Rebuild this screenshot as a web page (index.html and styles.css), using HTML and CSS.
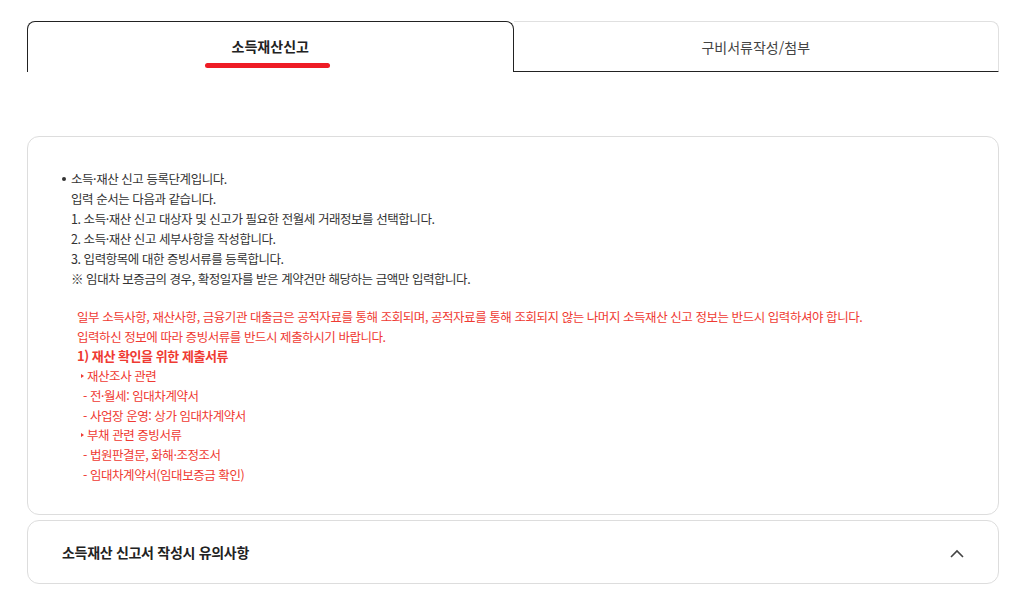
FILE: index.html
```html
<!DOCTYPE html>
<html lang="ko">
<head>
    <meta charset="UTF-8">
    <meta name="viewport" content="width=device-width, initial-scale=1.0">
    <title>소득재산신고</title>
    <link rel="stylesheet" href="styles.css">
</head>
<body>
    <div class="page">
        <div class="tabs">
            <div class="tab active">
                <span class="tab-label">소득재산신고</span>
                <span class="tab-bar"></span>
            </div>
            <div class="tab">
                <span class="tab-label">구비서류작성/첨부</span>
            </div>
        </div>

        <div class="guide">
            <ul class="guide-list">
                <li>
                    소득·재산 신고 등록단계입니다.<br>
                    입력 순서는 다음과 같습니다.<br>
                    1. 소득·재산 신고 대상자 및 신고가 필요한 전월세 거래정보를 선택합니다.<br>
                    2. 소득·재산 신고 세부사항을 작성합니다.<br>
                    3. 입력항목에 대한 증빙서류를 등록합니다.<br>
                    ※ 임대차 보증금의 경우, 확정일자를 받은 계약건만 해당하는 금액만 입력합니다.
                </li>
            </ul>

            <div class="notice">
                <p>일부 소득사항, 재산사항, 금융기관 대출금은 공적자료를 통해 조회되며, 공적자료를 통해 조회되지 않는 나머지 소득재산 신고 정보는 반드시 입력하셔야 합니다.</p>
                <p>입력하신 정보에 따라 증빙서류를 반드시 제출하시기 바랍니다.</p>
                <p class="notice-title">1) 재산 확인을 위한 제출서류</p>
                <p class="notice-group">재산조사 관련</p>
                <p class="notice-item">- 전·월세: 임대차계약서</p>
                <p class="notice-item">- 사업장 운영: 상가 임대차계약서</p>
                <p class="notice-group">부채 관련 증빙서류</p>
                <p class="notice-item">- 법원판결문, 화해·조정조서</p>
                <p class="notice-item">- 임대차계약서(임대보증금 확인)</p>
            </div>
        </div>

        <div class="accordion">
            <span class="accordion-title">소득재산 신고서 작성시 유의사항</span>
            <svg class="chevron" width="14" height="9" viewBox="0 0 14 9">
                <path d="M1 8 L7 2 L13 8" fill="none" stroke="#444" stroke-width="1.6"/>
            </svg>
        </div>
    </div>
</body>
</html>
```

FILE: styles.css
```css
body {
    margin: 0;
    font-family: "Noto Sans CJK KR", "Noto Sans", sans-serif;
    color: #333;
    background: #fff;
}

.page {
    padding: 21px 24px 0 27px;
}

/* tabs */
.tabs {
    display: flex;
    height: 51px;
}

.tab {
    flex: 1;
    display: flex;
    flex-direction: column;
    align-items: center;
    justify-content: center;
    border: 1px solid #e0e0e0;
    border-left: none;
    border-bottom: 1px solid #222;
    border-radius: 0 8px 0 0;
    box-sizing: border-box;
    font-size: 14px;
    color: #444;
}

.tab .tab-label {
    line-height: 20px;
}

.tab.active {
    border: 1px solid #222;
    border-bottom: none;
    border-radius: 8px 8px 0 0;
    color: #222;
    font-weight: 700;
    padding-top: 9px;
}

.tab-bar {
    display: block;
    width: 125px;
    height: 5px;
    margin-top: 7px;
    margin-left: -5px;
    border-radius: 3px;
    background: #ee1c25;
}

/* guide box */
.guide {
    margin-top: 64px;
    border: 1px solid #ddd;
    border-radius: 12px;
    padding: 32px 34px 30px;
    font-size: 12.5px;
    line-height: 20px;
    letter-spacing: -0.45px;
    color: #333;
}

.guide-list {
    margin: 0;
    padding: 0;
    list-style: none;
}

.guide-list li {
    position: relative;
    padding-left: 9px;
}

.guide-list li::before {
    content: "";
    position: absolute;
    left: 0;
    top: 8px;
    width: 4px;
    height: 4px;
    border-radius: 50%;
    background: #333;
}

.notice {
    margin-top: 18px;
    padding-left: 15px;
    color: #ef3a32;
    line-height: 19.7px;
}

.notice p {
    margin: 0;
}

.notice .notice-title {
    font-weight: 700;
    font-size: 13px;
}

.notice .notice-group {
    position: relative;
    padding-left: 10px;
}

.notice .notice-group::before {
    content: "";
    position: absolute;
    left: 4px;
    top: 8px;
    border-left: 3px solid #ef3a32;
    border-top: 2.5px solid transparent;
    border-bottom: 2.5px solid transparent;
}

.notice .notice-item {
    padding-left: 6px;
}

/* accordion */
.accordion {
    margin-top: 5px;
    height: 64px;
    box-sizing: border-box;
    border: 1px solid #ddd;
    border-radius: 12px;
    padding: 0 34px 0 34px;
    display: flex;
    align-items: center;
    justify-content: space-between;
}

.accordion-title {
    font-size: 14px;
    font-weight: 700;
    letter-spacing: -0.3px;
    color: #222;
}

.chevron {
    margin-top: 2px;
}
```
